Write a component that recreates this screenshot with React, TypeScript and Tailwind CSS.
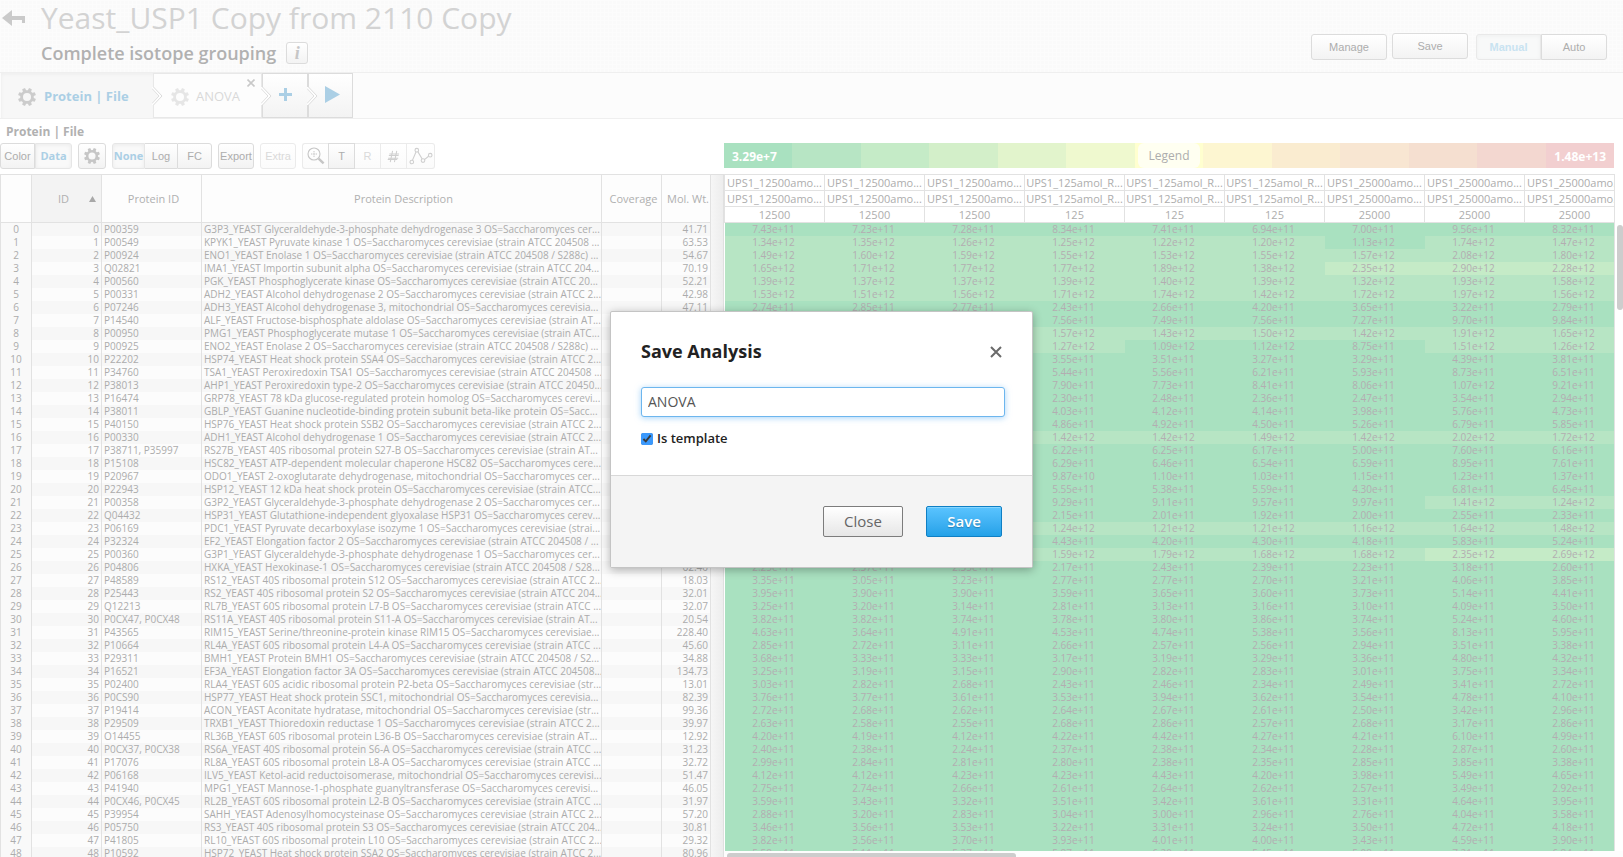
import React from "react";

type Protein = [id: string, description: string, weight: string, values: string];

const PROTEINS: Protein[] = [
  ["P00359", "G3P3_YEAST Glyceraldehyde-3-phosphate dehydrogenase 3 OS=Saccharomyces cer...", "41.71", "7.43e+11 7.23e+11 7.28e+11 8.34e+11 7.41e+11 6.94e+11 7.00e+11 9.56e+11 8.32e+11"],
  ["P00549", "KPYK1_YEAST Pyruvate kinase 1 OS=Saccharomyces cerevisiae (strain ATCC 204508 ...", "63.53", "1.34e+12 1.35e+12 1.26e+12 1.25e+12 1.22e+12 1.20e+12 1.13e+12 1.74e+12 1.47e+12"],
  ["P00924", "ENO1_YEAST Enolase 1 OS=Saccharomyces cerevisiae (strain ATCC 204508 / S288c) ...", "54.67", "1.49e+12 1.60e+12 1.59e+12 1.55e+12 1.53e+12 1.55e+12 1.57e+12 2.08e+12 1.80e+12"],
  ["Q02821", "IMA1_YEAST Importin subunit alpha OS=Saccharomyces cerevisiae (strain ATCC 204...", "70.19", "1.65e+12 1.71e+12 1.77e+12 1.77e+12 1.89e+12 1.38e+12 2.35e+12 2.90e+12 2.28e+12"],
  ["P00560", "PGK_YEAST Phosphoglycerate kinase OS=Saccharomyces cerevisiae (strain ATCC 20...", "52.21", "1.39e+12 1.37e+12 1.37e+12 1.39e+12 1.40e+12 1.39e+12 1.32e+12 1.93e+12 1.58e+12"],
  ["P00331", "ADH2_YEAST Alcohol dehydrogenase 2 OS=Saccharomyces cerevisiae (strain ATCC 2...", "42.98", "1.53e+12 1.51e+12 1.56e+12 1.71e+12 1.74e+12 1.42e+12 1.72e+12 1.97e+12 1.56e+12"],
  ["P07246", "ADH3_YEAST Alcohol dehydrogenase 3, mitochondrial OS=Saccharomyces cerevisia...", "47.11", "2.74e+11 2.85e+11 2.77e+11 2.43e+11 2.66e+11 4.20e+11 3.65e+11 3.22e+11 2.79e+11"],
  ["P14540", "ALF_YEAST Fructose-bisphosphate aldolase OS=Saccharomyces cerevisiae (strain AT...", "", "- - - 7.56e+11 7.49e+11 7.56e+11 7.27e+11 9.70e+11 9.84e+11"],
  ["P00950", "PMG1_YEAST Phosphoglycerate mutase 1 OS=Saccharomyces cerevisiae (strain ATC...", "", "- - - 1.57e+12 1.43e+12 1.50e+12 1.42e+12 1.91e+12 1.65e+12"],
  ["P00925", "ENO2_YEAST Enolase 2 OS=Saccharomyces cerevisiae (strain ATCC 204508 / S288c) ...", "", "- - - 1.27e+12 1.09e+12 1.12e+12 8.75e+11 1.51e+12 1.26e+12"],
  ["P22202", "HSP74_YEAST Heat shock protein SSA4 OS=Saccharomyces cerevisiae (strain ATCC 2...", "", "- - - 3.55e+11 3.51e+11 3.27e+11 3.29e+11 4.39e+11 3.81e+11"],
  ["P34760", "TSA1_YEAST Peroxiredoxin TSA1 OS=Saccharomyces cerevisiae (strain ATCC 204508 ...", "", "- - - 5.44e+11 5.56e+11 6.21e+11 5.93e+11 8.73e+11 6.51e+11"],
  ["P38013", "AHP1_YEAST Peroxiredoxin type-2 OS=Saccharomyces cerevisiae (strain ATCC 20450...", "", "- - - 7.90e+11 7.73e+11 8.41e+11 8.06e+11 1.07e+12 9.21e+11"],
  ["P16474", "GRP78_YEAST 78 kDa glucose-regulated protein homolog OS=Saccharomyces cerevi...", "", "- - - 2.30e+11 2.48e+11 2.36e+11 2.47e+11 3.54e+11 2.94e+11"],
  ["P38011", "GBLP_YEAST Guanine nucleotide-binding protein subunit beta-like protein OS=Sacc...", "", "- - - 4.03e+11 4.12e+11 4.14e+11 3.98e+11 5.76e+11 4.73e+11"],
  ["P40150", "HSP76_YEAST Heat shock protein SSB2 OS=Saccharomyces cerevisiae (strain ATCC 2...", "", "- - - 4.86e+11 4.92e+11 4.50e+11 5.26e+11 6.79e+11 5.85e+11"],
  ["P00330", "ADH1_YEAST Alcohol dehydrogenase 1 OS=Saccharomyces cerevisiae (strain ATCC 2...", "", "- - - 1.42e+12 1.42e+12 1.49e+12 1.42e+12 2.02e+12 1.72e+12"],
  ["P38711, P35997", "RS27B_YEAST 40S ribosomal protein S27-B OS=Saccharomyces cerevisiae (strain AT...", "", "- - - 6.22e+11 6.25e+11 6.17e+11 5.00e+11 7.60e+11 6.16e+11"],
  ["P15108", "HSC82_YEAST ATP-dependent molecular chaperone HSC82 OS=Saccharomyces cere...", "", "- - - 6.29e+11 6.46e+11 6.54e+11 6.59e+11 8.95e+11 7.61e+11"],
  ["P20967", "ODO1_YEAST 2-oxoglutarate dehydrogenase, mitochondrial OS=Saccharomyces cer...", "", "- - - 9.87e+10 1.10e+11 1.03e+11 1.15e+11 1.23e+11 1.37e+11"],
  ["P22943", "HSP12_YEAST 12 kDa heat shock protein OS=Saccharomyces cerevisiae (strain ATCC...", "", "- - - 5.55e+11 5.38e+11 5.59e+11 4.30e+11 6.81e+11 6.45e+11"],
  ["P00358", "G3P2_YEAST Glyceraldehyde-3-phosphate dehydrogenase 2 OS=Saccharomyces cer...", "", "- - - 9.29e+11 9.11e+11 9.57e+11 9.97e+11 1.41e+12 1.24e+12"],
  ["Q04432", "HSP31_YEAST Glutathione-independent glyoxalase HSP31 OS=Saccharomyces cerev...", "", "- - - 2.15e+11 2.01e+11 1.92e+11 2.00e+11 2.55e+11 2.33e+11"],
  ["P06169", "PDC1_YEAST Pyruvate decarboxylase isozyme 1 OS=Saccharomyces cerevisiae (strai...", "", "- - - 1.24e+12 1.21e+12 1.21e+12 1.16e+12 1.64e+12 1.48e+12"],
  ["P32324", "EF2_YEAST Elongation factor 2 OS=Saccharomyces cerevisiae (strain ATCC 204508 / ...", "", "- - - 4.43e+11 4.20e+11 4.30e+11 4.18e+11 5.83e+11 5.24e+11"],
  ["P00360", "G3P1_YEAST Glyceraldehyde-3-phosphate dehydrogenase 1 OS=Saccharomyces cer...", "", "- - - 1.59e+12 1.79e+12 1.68e+12 1.68e+12 2.35e+12 2.69e+12"],
  ["P04806", "HXKA_YEAST Hexokinase-1 OS=Saccharomyces cerevisiae (strain ATCC 204508 / S28...", "62.40", "2.25e+11 2.37e+11 2.35e+11 2.17e+11 2.43e+11 2.39e+11 2.23e+11 3.18e+11 2.60e+11"],
  ["P48589", "RS12_YEAST 40S ribosomal protein S12 OS=Saccharomyces cerevisiae (strain ATCC 2...", "18.03", "3.35e+11 3.05e+11 3.23e+11 2.77e+11 2.77e+11 2.70e+11 3.21e+11 4.06e+11 3.85e+11"],
  ["P25443", "RS2_YEAST 40S ribosomal protein S2 OS=Saccharomyces cerevisiae (strain ATCC 204...", "32.01", "3.95e+11 3.90e+11 3.90e+11 3.59e+11 3.65e+11 3.60e+11 3.73e+11 5.14e+11 4.41e+11"],
  ["Q12213", "RL7B_YEAST 60S ribosomal protein L7-B OS=Saccharomyces cerevisiae (strain ATCC ...", "32.07", "3.25e+11 3.20e+11 3.14e+11 2.81e+11 3.13e+11 3.16e+11 3.10e+11 4.09e+11 3.50e+11"],
  ["P0CX47, P0CX48", "RS11A_YEAST 40S ribosomal protein S11-A OS=Saccharomyces cerevisiae (strain AT...", "20.54", "3.82e+11 3.82e+11 3.74e+11 3.78e+11 3.80e+11 3.86e+11 3.74e+11 5.24e+11 4.60e+11"],
  ["P43565", "RIM15_YEAST Serine/threonine-protein kinase RIM15 OS=Saccharomyces cerevisiae...", "228.40", "4.63e+11 3.64e+11 4.91e+11 4.53e+11 4.74e+11 5.38e+11 3.56e+11 8.13e+11 5.95e+11"],
  ["P10664", "RL4A_YEAST 60S ribosomal protein L4-A OS=Saccharomyces cerevisiae (strain ATCC ...", "45.60", "2.85e+11 2.72e+11 3.11e+11 2.66e+11 2.57e+11 2.56e+11 2.94e+11 3.51e+11 3.38e+11"],
  ["P29311", "BMH1_YEAST Protein BMH1 OS=Saccharomyces cerevisiae (strain ATCC 204508 / S2...", "34.88", "3.68e+11 3.33e+11 3.33e+11 3.17e+11 3.19e+11 3.29e+11 3.36e+11 4.80e+11 4.32e+11"],
  ["P16521", "EF3A_YEAST Elongation factor 3A OS=Saccharomyces cerevisiae (strain ATCC 204508...", "134.73", "3.25e+11 3.19e+11 3.15e+11 2.90e+11 2.82e+11 2.83e+11 3.01e+11 3.75e+11 3.34e+11"],
  ["P02400", "RLA4_YEAST 60S acidic ribosomal protein P2-beta OS=Saccharomyces cerevisiae (str...", "13.01", "3.03e+11 2.82e+11 2.68e+11 2.43e+11 2.46e+11 2.34e+11 2.49e+11 3.41e+11 2.72e+11"],
  ["P0CS90", "HSP77_YEAST Heat shock protein SSC1, mitochondrial OS=Saccharomyces cerevisia...", "82.39", "3.76e+11 3.77e+11 3.61e+11 3.53e+11 3.94e+11 3.62e+11 3.54e+11 4.78e+11 4.10e+11"],
  ["P19414", "ACON_YEAST Aconitate hydratase, mitochondrial OS=Saccharomyces cerevisiae (str...", "99.36", "2.72e+11 2.68e+11 2.62e+11 2.64e+11 2.67e+11 2.61e+11 2.50e+11 3.42e+11 2.96e+11"],
  ["P29509", "TRXB1_YEAST Thioredoxin reductase 1 OS=Saccharomyces cerevisiae (strain ATCC 2...", "39.97", "2.63e+11 2.58e+11 2.55e+11 2.68e+11 2.86e+11 2.57e+11 2.68e+11 3.17e+11 2.86e+11"],
  ["O14455", "RL36B_YEAST 60S ribosomal protein L36-B OS=Saccharomyces cerevisiae (strain AT...", "12.92", "4.20e+11 4.19e+11 4.12e+11 4.22e+11 4.42e+11 4.27e+11 4.21e+11 6.10e+11 4.99e+11"],
  ["P0CX37, P0CX38", "RS6A_YEAST 40S ribosomal protein S6-A OS=Saccharomyces cerevisiae (strain ATCC ...", "31.23", "2.40e+11 2.38e+11 2.24e+11 2.37e+11 2.38e+11 2.34e+11 2.28e+11 2.87e+11 2.60e+11"],
  ["P17076", "RL8A_YEAST 60S ribosomal protein L8-A OS=Saccharomyces cerevisiae (strain ATCC ...", "32.72", "2.99e+11 2.84e+11 2.81e+11 2.80e+11 2.38e+11 2.35e+11 2.85e+11 3.85e+11 3.38e+11"],
  ["P06168", "ILV5_YEAST Ketol-acid reductoisomerase, mitochondrial OS=Saccharomyces cerevisi...", "51.47", "4.12e+11 4.12e+11 4.23e+11 4.23e+11 4.43e+11 4.20e+11 3.98e+11 5.49e+11 4.65e+11"],
  ["P41940", "MPG1_YEAST Mannose-1-phosphate guanyltransferase OS=Saccharomyces cerevisi...", "46.05", "2.75e+11 2.74e+11 2.66e+11 2.61e+11 2.64e+11 2.62e+11 2.57e+11 3.49e+11 2.92e+11"],
  ["P0CX46, P0CX45", "RL2B_YEAST 60S ribosomal protein L2-B OS=Saccharomyces cerevisiae (strain ATCC ...", "31.97", "3.59e+11 3.43e+11 3.32e+11 3.51e+11 3.42e+11 3.61e+11 3.31e+11 4.64e+11 3.95e+11"],
  ["P39954", "SAHH_YEAST Adenosylhomocysteinase OS=Saccharomyces cerevisiae (strain ATCC 2...", "57.20", "2.88e+11 3.20e+11 2.83e+11 3.04e+11 3.00e+11 2.96e+11 2.76e+11 4.04e+11 3.58e+11"],
  ["P05750", "RS3_YEAST 40S ribosomal protein S3 OS=Saccharomyces cerevisiae (strain ATCC 204...", "30.81", "3.46e+11 3.56e+11 3.53e+11 3.22e+11 3.31e+11 3.24e+11 3.50e+11 4.72e+11 4.18e+11"],
  ["P41805", "RL10_YEAST 60S ribosomal protein L10 OS=Saccharomyces cerevisiae (strain ATCC 2...", "29.32", "3.82e+11 3.56e+11 3.70e+11 3.93e+11 4.01e+11 4.00e+11 3.43e+11 4.59e+11 3.90e+11"],
  ["P10592", "HSP72_YEAST Heat shock protein SSA2 OS=Saccharomyces cerevisiae (strain ATCC 2...", "80.96", "5.58e+11 5.11e+11 5.37e+11 5.87e+11 6.20e+11 5.45e+11 5.08e+11 7.21e+11 6.84e+11"],
];

const SAMPLES = [
  ["UPS1_12500amo...", "12500"],
  ["UPS1_12500amo...", "12500"],
  ["UPS1_12500amo...", "12500"],
  ["UPS1_125amol_R...", "125"],
  ["UPS1_125amol_R...", "125"],
  ["UPS1_125amol_R...", "125"],
  ["UPS1_25000amo...", "25000"],
  ["UPS1_25000amo...", "25000"],
  ["UPS1_25000amo...", "25000"],
];

const LEGEND = [
  "bg-[#a9e1c0]", "bg-[#b7e5c4]", "bg-[#c5ebc7]", "bg-[#d3efc9]", "bg-[#e2f4cc]",
  "bg-[#eff9cf]", "bg-[#ffffcf]", "bg-[#fdf6d1]", "bg-[#faecd0]", "bg-[#f8e6d2]",
  "bg-[#f5dfd0]", "bg-[#f3d7d0]", "bg-[#f2cfd0]",
];

// Each legend bucket spans one thirteenth of the maximum intensity (1.48e+13).
function heat(value: string) {
  const n = Number(value);
  if (n > 2.25e12) return "bg-[#c5ebc7]";
  if (n > 1.14e12) return "bg-[#b7e5c4]";
  return "bg-[#a9e1c0]";
}

const raised = "border border-[#dcdcdc] bg-linear-to-b from-white to-[#f3f3f3] text-[#adadad]";
const faint = "border border-[#ebebeb] bg-linear-to-b from-white to-[#fbfbfb] text-[#dadada]";
const pressed =
  "border border-[#e6e6e6] bg-[#f9f9f9] font-['Open_Sans',sans-serif] font-bold text-[#abcfe5] shadow-[inset_0_1px_4px_rgba(0,0,0,0.06)]";
const tool = "flex h-[26px] items-center justify-center";

function Gear({ className }: { className: string }) {
  return (
    <svg viewBox="0 0 18 18" className={className} aria-hidden="true">
      <circle cx="9" cy="9" r="5.4" fill="none" stroke="currentColor" strokeWidth="2.8" />
      {[22.5, 67.5, 112.5, 157.5, 202.5, 247.5, 292.5, 337.5].map((a) => (
        <path key={a} d="M7.1 3.4 L7.5 0 H10.5 L10.9 3.4 Z" fill="currentColor" transform={`rotate(${a} 9 9)`} />
      ))}
    </svg>
  );
}

function Chevron({ fill }: { fill: string }) {
  return (
    <svg viewBox="0 0 11 20" className="absolute top-3 -left-0.5 h-5 w-[11px]" aria-hidden="true">
      <path d="M0 1 L1.5 1 L10 10 L1.5 19 L0 19 Z" fill="#ffffff" />
      <path d="M1.5 1 L10 10 L1.5 19" fill="none" stroke="#dcdcdc" strokeWidth="1" />
      <path d="M0 2.5 L7 10 L0 17.5 Z" fill={fill} />
      <path d="M0 2.5 L7 10 L0 17.5" fill="none" stroke="#dedede" strokeWidth="1" />
    </svg>
  );
}

function Header() {
  return (
    <header className="flex h-[73px] shrink-0 justify-between border-b border-[#efefef] bg-[#fafafa] bg-[linear-gradient(to_right,#fcfcfc_1px,transparent_1px),linear-gradient(to_bottom,#fcfcfc_1px,transparent_1px)] bg-[size:4px_4px]">
      <div className="flex">
        <button type="button" aria-label="Back" className="ml-0.5 flex w-[39px] items-start pt-[10px] text-[#cacaca]">
          <svg viewBox="0 0 24 17" className="h-[17px] w-6" aria-hidden="true">
            <path d="M0 8 L10 0 V6 H23 V13 H20 V10 H10 V16 Z" fill="currentColor" />
          </svg>
        </button>
        <div>
          <h1 className="text-[30px] leading-9 text-[#d3d3d3]">Yeast_USP1 Copy from 2110 Copy</h1>
          <div className="mt-[5px] flex h-6 items-center gap-[10px]">
            <h2 className="text-[18px] leading-6 font-semibold text-[#b1b1b1]">Complete isotope grouping</h2>
            <button
              type="button"
              aria-label="Info"
              className="flex h-[22px] w-[22px] items-center justify-center rounded-[3px] border border-[#dcdcdc] bg-linear-to-b from-white to-[#f3f3f3] font-['Liberation_Serif',serif] text-[18px] leading-none font-bold text-[#c6c6c6] italic"
            >
              i
            </button>
          </div>
        </div>
      </div>
      <div className="mt-[33px] mr-4 flex items-start font-['Liberation_Sans',sans-serif] text-[11px]">
        <button type="button" className={`${raised} mt-px h-[26px] w-[76px] rounded-[3px]`}>Manage</button>
        <button type="button" className={`${raised} ml-[5px] h-[26px] w-[76px] rounded-[3px]`}>Save</button>
        <button type="button" className="mt-px ml-2 h-[26px] w-[65px] rounded-l-[3px] border border-[#e9e9e9] bg-[#f8f9f9] font-bold text-[#c9e3f1] shadow-[inset_0_1px_4px_rgba(0,0,0,0.04)]">Manual</button>
        <button type="button" className={`${raised} mt-px h-[26px] w-[66px] rounded-r-[3px]`}>Auto</button>
      </div>
    </header>
  );
}

function Steps() {
  return (
    <nav className="flex h-[46px] shrink-0 border-b border-[#efefef] bg-[#fcfcfc] pl-px">
      <button type="button" className="flex h-[45px] w-[152px] items-center gap-2 bg-[#f7f7f7] pt-0.5 pl-[17px] text-[13px] font-bold text-[#abcfe5] shadow-[inset_1px_2px_3px_rgba(0,0,0,0.03)]">
        <Gear className="h-[18px] w-[18px] text-[#cccccc]" />
        Protein | File
      </button>
      <div className="relative flex h-[45px] w-[109px] border border-[#e8e8e8] bg-[#fdfdfd]">
        <Chevron fill="#f7f7f7" />
        <button type="button" className="flex items-center gap-[7px] pt-0.5 pl-[17px] text-[13px] text-[#d9d9d9]">
          <Gear className="h-[18px] w-[18px] text-[#e6e6e6]" />
          ANOVA
        </button>
        <button type="button" aria-label="Remove ANOVA" className="absolute top-[5px] right-1.5 text-[#c9c9c9]">
          <svg viewBox="0 0 8 8" className="h-2 w-2" aria-hidden="true">
            <path d="M0.5 0.5 L7.5 7.5 M7.5 0.5 L0.5 7.5" stroke="currentColor" strokeWidth="1.6" />
          </svg>
        </button>
      </div>
      <button type="button" aria-label="Add step" className={`${raised} relative flex h-[45px] w-[46px] items-center justify-center`}>
        <Chevron fill="#fdfdfd" />
        <svg viewBox="0 0 13 13" className="mb-0.5 h-[13px] w-[13px] text-[#abcfe5]" aria-hidden="true">
          <path d="M5 0 H8 V5 H13 V8 H8 V13 H5 V8 H0 V5 H5 Z" fill="currentColor" />
        </svg>
      </button>
      <button type="button" aria-label="Run" className={`${raised} relative flex h-[45px] w-[45px] items-center justify-center`}>
        <Chevron fill="#f9f9f9" />
        <svg viewBox="0 0 15 17" className="ml-1 mb-0.5 h-[17px] w-[15px] text-[#abcfe5]" aria-hidden="true">
          <path d="M0 0 L15 8.5 L0 17 Z" fill="currentColor" />
        </svg>
      </button>
    </nav>
  );
}

function Toolbar() {
  return (
    <div className="flex gap-1.5 font-['Liberation_Sans',sans-serif] text-[11px]">
      <div className="flex">
        <button type="button" className={`${tool} ${raised} w-[35px] rounded-l-[3px]`}>Color</button>
        <button type="button" className={`${tool} ${pressed} w-[37px] rounded-r-[3px]`}>Data</button>
      </div>
      <button type="button" aria-label="Settings" className={`${tool} ${raised} w-7 rounded-[3px]`}>
        <Gear className="h-4 w-4 text-[#c6c6c6]" />
      </button>
      <div className="flex">
        <button type="button" className={`${tool} ${pressed} w-[33px] rounded-l-[3px]`}>None</button>
        <button type="button" className={`${tool} ${raised} w-8 border-r-0 border-l-0`}>Log</button>
        <button type="button" className={`${tool} ${raised} w-[35px] rounded-r-[3px]`}>FC</button>
      </div>
      <button type="button" className={`${tool} ${raised} w-9 rounded-[3px]`}>Export</button>
      <button type="button" className={`${tool} ${faint} w-9 rounded-[3px]`}>Extra</button>
      <div className="flex">
        <button type="button" aria-label="Zoom" className={`${tool} ${faint} w-[26px] rounded-l-[3px] border-r-0`}>
          <svg viewBox="0 0 18 18" className="h-[18px] w-[18px] text-[#c6c6c6]" fill="none" stroke="currentColor" aria-hidden="true">
            <circle cx="7" cy="7" r="6" strokeWidth="1.1" />
            <path d="M7 4 V10 M4 7 H10" strokeWidth="1" strokeDasharray="1.4 0.9" />
            <path d="M11.6 11.6 L16.6 16.4" strokeWidth="2.4" />
          </svg>
        </button>
        <button type="button" className={`${tool} ${raised} w-[27px]`}>T</button>
        <button type="button" className={`${tool} ${faint} w-[26px] border-l-0`}>R</button>
        <button type="button" aria-label="Number" className={`${tool} ${faint} w-[26px] border-l-0`}>
          <svg viewBox="0 0 14 14" className="h-[13px] w-[13px] text-[#cfcfcf]" fill="none" stroke="currentColor" strokeWidth="1.1" aria-hidden="true">
            <path d="M6 1 L3.5 13 M10.5 1 L8 13 M2.5 4.2 H13 M2 5.8 H12.5 M1.2 8.8 H12 M0.8 10.2 H11" />
          </svg>
        </button>
        <button type="button" aria-label="Line plot" className={`${tool} ${faint} w-7 rounded-r-[3px] border-l-0`}>
          <svg viewBox="0 0 24 18" className="h-[18px] w-6 text-[#cfcfcf]" fill="none" stroke="currentColor" strokeWidth="1.1" aria-hidden="true">
            <path d="M3.4 13.4 L7 5 M8.8 4.6 L13.2 12 M15.4 12.6 L19.6 9.2" />
            <circle cx="2.8" cy="15" r="1.8" />
            <circle cx="7.8" cy="3.2" r="1.8" />
            <circle cx="14" cy="13.6" r="1.8" />
            <circle cx="21.2" cy="8.2" r="1.8" />
          </svg>
        </button>
      </div>
    </div>
  );
}

function ProteinTable() {
  const head = "border border-[#e2e2e2] p-0 font-normal";
  const cell = "overflow-hidden border-x border-[#e2e2e2] px-0.5 py-0 whitespace-nowrap";
  return (
    <table className="w-full table-fixed border-collapse bg-[#fdfdfd] text-[10px] leading-[13px] text-[#acacac]">
      <colgroup>
        <col className="w-[31px]" />
        <col className="w-[70px]" />
        <col className="w-[100px]" />
        <col />
        <col className="w-[60px]" />
        <col className="w-[49px]" />
      </colgroup>
      <thead>
        <tr className="h-12 text-[11px] text-[#b0b0b0]">
          <th className={head} />
          <th className={`${head} bg-[#f3f3f3]`}>
            <div className="flex items-center justify-between pr-[5px] pl-[26px]">
              ID
              <svg viewBox="0 0 7 6" className="h-1.5 w-[7px]" aria-hidden="true">
                <path d="M3.5 0 L7 6 H0 Z" fill="#a8a8a8" />
              </svg>
            </div>
          </th>
          <th className={head}><div className="pl-1">Protein ID</div></th>
          <th className={head}><div className="pl-1">Protein Description</div></th>
          <th className={head}><div className="pl-1">Coverage</div></th>
          <th className={`${head} whitespace-nowrap`}><div className="pl-1">Mol. Wt.</div></th>
        </tr>
      </thead>
      <tbody>
        {PROTEINS.map(([id, description, weight], i) => (
          <tr key={i} className="h-[13px] odd:bg-[#f7f7f7] even:bg-[#fcfcfc]">
            <td className={`${cell} bg-[#f9f9f9] text-center`}>{i}</td>
            <td className={`${cell} text-right`}>{i}</td>
            <td className={cell}>{id}</td>
            <td className={cell}>{description}</td>
            <td className={cell} />
            <td className={`${cell} text-right`}>{weight}</td>
          </tr>
        ))}
      </tbody>
    </table>
  );
}

function HeatTable() {
  const head = "overflow-hidden border border-[#e2e2e2] p-0 text-center font-normal whitespace-nowrap";
  return (
    <table className="w-[901px] table-fixed border-collapse text-[10px] leading-[13px] text-[#b3adb1]">
      <thead className="bg-white text-[11px] leading-[15px] text-[#adadad]">
        <tr className="h-4">{SAMPLES.map(([name], i) => <th key={i} className={head}>{name}</th>)}</tr>
        <tr className="h-4">{SAMPLES.map(([name], i) => <th key={i} className={head}>{name}</th>)}</tr>
        <tr className="h-4">{SAMPLES.map(([, amount], i) => <th key={i} className={head}>{amount}</th>)}</tr>
      </thead>
      <tbody>
        {PROTEINS.map(([, , , values], i) => (
          <tr key={i} className="h-[13px]">
            {values.split(" ").map((v, j) => (
              <td key={j} className={`${heat(v)} py-0 pr-0.5 pl-0 text-center`}>{v === "-" ? "" : v}</td>
            ))}
          </tr>
        ))}
      </tbody>
    </table>
  );
}

function SaveDialog() {
  return (
    <div className="absolute inset-0 flex items-start justify-center pt-[311px] pl-5">
      <div
        role="dialog"
        aria-modal="true"
        aria-labelledby="dialog-title"
        className="w-[423px] rounded-[2px] border border-[#c4c4c4] bg-white shadow-[0_2px_10px_rgba(0,0,0,0.3)]"
      >
        <div className="px-[30px] pt-[27px] pb-[27px]">
          <div className="flex items-center justify-between">
            <h2 id="dialog-title" className="text-[18px] leading-6 font-bold text-[#222222]">Save Analysis</h2>
            <button type="button" aria-label="Close dialog" className="pt-0.5 text-[#6a6a6a]">
              <svg viewBox="0 0 12 12" className="h-3 w-3" aria-hidden="true">
                <path d="M1 1 L11 11 M11 1 L1 11" stroke="currentColor" strokeWidth="2" />
              </svg>
            </button>
          </div>
          <input
            type="text"
            aria-label="Analysis name"
            defaultValue="ANOVA"
            className="mt-6 block h-[30px] w-[364px] rounded-[3px] border border-[#6db6ee] bg-white px-1.5 pb-0.5 text-[14px] text-[#555555] shadow-[0_1px_6px_rgba(108,184,245,0.6)] outline-none"
          />
          <label className="mt-[11px] flex h-5 items-center gap-1 text-[13px] leading-5 font-semibold text-[#222222]">
            <input type="checkbox" defaultChecked className="mt-0.5 h-3 w-3 accent-[#3b99fc]" />
            Is template
          </label>
        </div>
        <div className="flex justify-end gap-[23px] border-t border-[#d8d8d8] bg-[#f4f4f4] px-[30px] py-[30px] text-[15px]">
          <button type="button" className="h-[31px] w-20 rounded-[2px] border border-[#7c7c7c] bg-linear-to-b from-white to-[#e6e6e6] text-[#666666]">
            Close
          </button>
          <button type="button" className="h-[31px] w-[76px] rounded-[2px] border border-[#0f7fc4] bg-linear-to-b from-[#5ac4ff] to-[#22a1e8] font-semibold text-white shadow-[inset_0_1px_0_#86d5ff] text-shadow-[0_1px_1px_rgba(0,0,0,0.25)]">
            Save
          </button>
        </div>
      </div>
    </div>
  );
}

export default function App() {
  return (
    <div className="relative flex h-screen flex-col overflow-hidden bg-white font-['Open_Sans',sans-serif]">
      <Header />
      <Steps />
      <main className="flex min-h-0 flex-1">
        <section className="flex w-[711px] shrink-0 flex-col overflow-hidden">
          <h3 className="h-6 shrink-0 pl-1.5 text-[12px] leading-[26px] font-bold text-[#b1b1b1]">Protein | File</h3>
          <Toolbar />
          <div className="mt-[5px] min-h-0 flex-1 overflow-hidden">
            <ProteinTable />
          </div>
        </section>
        <div className="mt-[55px] w-[13px] shrink-0 border-t border-r border-[#e0e0e0] bg-linear-to-r from-[#f6f6f6] to-[#ededed]" />
        <section className="flex min-w-0 flex-1 flex-col pt-6">
          <div className="relative mr-[9px] flex h-[25px] shrink-0 text-[12px]">
            {LEGEND.map((color) => <div key={color} className={`${color} flex-1`} />)}
            <div className="absolute inset-0 flex items-center justify-between px-2 pt-0.5 font-bold text-white">
              <span>3.29e+7</span>
              <span>1.48e+13</span>
            </div>
            <div className="absolute inset-0 flex items-center justify-center">
              <span className="h-[25px] rounded-md bg-white/70 px-[11px] leading-[26px] text-[#adadad]">Legend</span>
            </div>
          </div>
          <div className="mt-1.5 flex min-h-0 flex-1">
            <div className="min-w-0 flex-1 overflow-hidden border-r border-[#e2e2e2]">
              <HeatTable />
            </div>
            <div className="w-2 shrink-0 pt-[51px] pl-0.5">
              <div className="h-[85px] w-1.5 rounded-[3px] bg-[#cdcdcd]" />
            </div>
          </div>
          <div className="h-1.5 shrink-0 overflow-hidden bg-[#fdfdfd] pt-0.5 pl-[3px]">
            <div className="h-2 w-[289px] rounded-[3px] bg-[#cdcdcd]" />
          </div>
        </section>
      </main>
      <SaveDialog />
    </div>
  );
}
